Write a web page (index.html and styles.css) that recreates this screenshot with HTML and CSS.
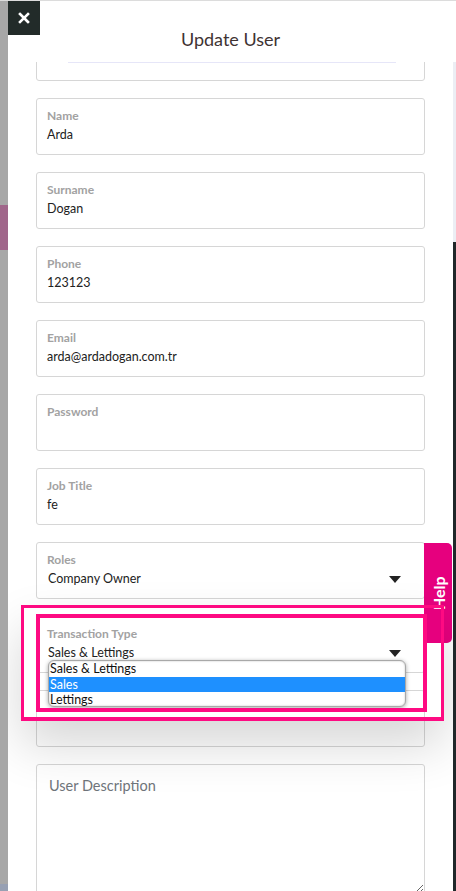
FILE: index.html
```html
<html>

<head>
    <title>Update User</title>
    <meta name="viewport" content="width=device-width, initial-scale=1">
    <link rel="stylesheet" href="styles.css">
</head>

<body>
    <div class="backdrop-left">
        <div class="bd-gray bd-top"></div>
        <div class="bd-mauve"></div>
        <div class="bd-gray bd-fill"></div>
        <div class="bd-blue"></div>
    </div>

    <main class="panel">
        <header class="panel-head">
            <button class="close" aria-label="Close">
                <svg width="12" height="12" viewBox="0 0 12 12">
                    <path d="M2 2 L10 10 M10 2 L2 10" stroke="#fff" stroke-width="2.6" stroke-linecap="square" />
                </svg>
            </button>
            <h1 class="title">Update User</h1>
        </header>

        <section class="scroll">
            <div class="head-rule"></div>
            <form class="fields">
                <div class="field field-clipped">
                    <label>Branch</label>
                    <div class="value-row">
                        <span class="value">All</span>
                        <span class="caret"></span>
                    </div>
                </div>
                <div class="field">
                    <label>Name</label>
                    <span class="value">Arda</span>
                </div>
                <div class="field">
                    <label>Surname</label>
                    <span class="value">Dogan</span>
                </div>
                <div class="field">
                    <label>Phone</label>
                    <span class="value">123123</span>
                </div>
                <div class="field">
                    <label>Email</label>
                    <span class="value">arda@ardadogan.com.tr</span>
                </div>
                <div class="field">
                    <label>Password</label>
                    <span class="value"></span>
                </div>
                <div class="field">
                    <label>Job Title</label>
                    <span class="value">fe</span>
                </div>
                <div class="field">
                    <label>Roles</label>
                    <div class="value-row">
                        <span class="value">Company Owner</span>
                        <span class="caret"></span>
                    </div>
                </div>
                <div class="field field-tx">
                    <div class="mark mark-outer"></div>
                    <label>Transaction Type</label>
                    <div class="value-row">
                        <span class="value">Sales &amp; Lettings</span>
                        <span class="caret"></span>
                    </div>
                    <ul class="options">
                        <li>Sales &amp; Lettings</li>
                        <li class="selected">Sales</li>
                        <li>Lettings</li>
                    </ul>
                    <div class="mark mark-inner"></div>
                </div>
                <div class="field">
                    <label>&nbsp;</label>
                    <span class="value"></span>
                </div>
                <textarea class="description" placeholder="User Description"></textarea>
            </form>
        </section>
    </main>

    <div class="backdrop-right">
        <div class="br-white"></div>
        <div class="br-light"></div>
        <div class="br-dark"></div>
    </div>

    <a class="help-tab" href="#">Help</a>
</body>

</html>
```

FILE: styles.css
```css
html,
body {
    margin: 0px;
    padding: 0px;
    height: 891px;
    overflow: hidden;
}

body {
    display: flex;
    font-family: Lato, "Open Sans", sans-serif;
    border-top: 1px solid #dcdcdc;
    box-sizing: border-box;
    background: #a7a7a7;
}

/* page behind the drawer */
.backdrop-left {
    width: 8px;
    display: flex;
    flex-direction: column;
}

.bd-gray {
    background: #a7a7a7;
}

.bd-top {
    height: 204px;
}

.bd-mauve {
    height: 45px;
    background: #a0668a;
}

.bd-fill {
    flex: 1;
}

.bd-blue {
    height: 7px;
    background: #97a0b3;
}

.backdrop-right {
    width: 3px;
    display: flex;
    flex-direction: column;
}

.br-white {
    height: 61px;
    background: #fff;
}

.br-light {
    height: 180px;
    background: #eceef4;
}

.br-dark {
    flex: 1;
    background: #20282a;
}

/* drawer */
.panel {
    flex: 1;
    display: flex;
    flex-direction: column;
    background: #fff;
    min-width: 0;
}

.panel-head {
    height: 61px;
    flex-shrink: 0;
    display: grid;
    grid-template-columns: 32px 1fr 32px;
    grid-template-rows: 61px;
}

.close {
    width: 32px;
    height: 34px;
    padding: 0px;
    border: none;
    background: #222b29;
    display: flex;
    align-items: center;
    justify-content: center;
}

.title {
    margin: 27px 0px 0px 0px;
    font-size: 18px;
    line-height: 22px;
    font-weight: normal;
    color: #3f3333;
    text-align: center;
}

.scroll {
    flex: 1;
    overflow: hidden;
    padding: 0px 28px;
    position: relative;
}

.head-rule {
    position: absolute;
    top: 0px;
    left: 60px;
    width: 328px;
    height: 1px;
    background: #e6e6f8;
    z-index: 1;
}

.fields {
    margin: -38px 0px 0px 0px;
    display: flex;
    flex-direction: column;
    gap: 17px;
}

.field {
    height: 57px;
    box-sizing: border-box;
    border: 1px solid #d6d6d6;
    border-radius: 3px;
    padding: 9px 10px 0px 10px;
    display: flex;
    flex-direction: column;
    background: #fff;
}

.field label {
    font-size: 12px;
    line-height: 16px;
    font-weight: bold;
    color: #a2a2a2;
}

.value {
    margin-top: 3px;
    font-size: 12.5px;
    line-height: 16px;
    color: #222;
}

.field-clipped .value-row {
    margin-top: -3px;
}

.value-row {
    display: flex;
    align-items: center;
    justify-content: space-between;
}

.value-row .value {
    padding-left: 1px;
}

.caret {
    margin: 3px 13px 0px 0px;
    width: 0px;
    height: 0px;
    border-left: 6.5px solid transparent;
    border-right: 6.5px solid transparent;
    border-top: 7px solid #222;
}

/* open select */
.field-tx {
    position: relative;
    z-index: 2;
}

.options {
    position: absolute;
    top: 43px;
    left: 11px;
    width: 358px;
    height: 47px;
    box-sizing: border-box;
    margin: 0px;
    padding: 0px;
    list-style: none;
    background: #fff;
    border: 1px solid #a8a8a8;
    border-radius: 6px;
    box-shadow: 0px 1px 4px rgba(0, 0, 0, 0.35), inset 0px 0px 2px rgba(0, 0, 0, 0.25);
    overflow: hidden;
    z-index: 3;
}

.options li {
    font-size: 12.5px;
    line-height: 15.5px;
    padding-left: 1px;
    color: #111;
}

.options .selected {
    background: #1e90ff;
    color: #fff;
}

/* annotation frames */
.mark {
    position: absolute;
    box-sizing: border-box;
    pointer-events: none;
    z-index: 4;
}

.mark-inner {
    top: -3px;
    left: -1px;
    width: 391px;
    height: 98px;
    border: 4px solid #fe0a82;
}

.mark-outer {
    top: -12px;
    left: -16px;
    width: 423px;
    height: 116px;
    border: 3px solid #fe0a82;
    border-bottom-width: 4px;
    box-shadow: 0px 24px 50px rgba(0, 0, 0, 0.16);
    z-index: -1;
}

.description {
    height: 130px;
    box-sizing: border-box;
    border: 1px solid #d6d6d6;
    border-radius: 3px;
    padding: 12px 12px;
    font-family: Lato, "Open Sans", sans-serif;
    font-size: 14.5px;
    color: #222;
}

.description::placeholder {
    color: #6f757b;
}

/* floating help button */
.help-tab {
    position: absolute;
    top: 543px;
    left: 424px;
    width: 28px;
    height: 100px;
    box-sizing: border-box;
    background: #e6007e;
    border-radius: 5px 0px 0px 5px;
    color: #fff;
    font-size: 16px;
    font-weight: bold;
    text-decoration: none;
    writing-mode: vertical-rl;
    transform: rotate(180deg);
    display: flex;
    align-items: center;
    justify-content: center;
    z-index: 1;
}
```
